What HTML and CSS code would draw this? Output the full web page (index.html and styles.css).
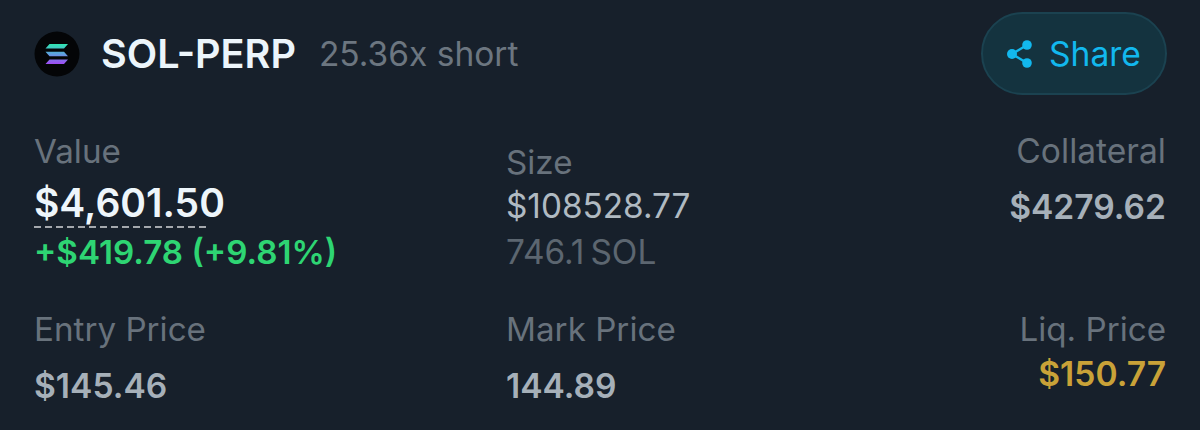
FILE: index.html
```html
<!DOCTYPE html>
<html lang="en">
<head>
    <meta charset="UTF-8">
    <meta name="viewport" content="width=device-width, initial-scale=1.0">
    <title>SOL-PERP</title>
    <link rel="stylesheet" href="styles.css">
</head>
<body>
    <div class="card">
        <div class="header">
            <div class="market">
                <svg class="logo" viewBox="0 0 46 46" width="46" height="46">
                    <defs>
                        <linearGradient id="sol" x1="0" y1="0" x2="0" y2="1">
                            <stop offset="0" stop-color="#2fe6b0"/>
                            <stop offset="0.5" stop-color="#5f9fe0"/>
                            <stop offset="1" stop-color="#a04bf5"/>
                        </linearGradient>
                    </defs>
                    <circle cx="23" cy="23" r="22.5" fill="#040507"/>
                    <path fill="url(#sol)" d="M15.500 13h18.500l-4 4.600h-18.500zM11.500 20.700h18.500l4 4.600h-18.500zM15.500 28.400h18.500l-4 4.600h-18.500z"/>
                </svg>
                <span class="symbol">SOL-PERP</span>
                <span class="leverage">25.36x short</span>
            </div>
            <button class="share">
                <svg viewBox="0 0 26 28" width="26" height="28">
                    <path d="M20 5 5 14l15 9" fill="none" stroke="#12b8ee" stroke-width="2.400"/>
                    <circle cx="20" cy="5" r="4.800" fill="#12b8ee"/>
                    <circle cx="5" cy="14" r="5" fill="#12b8ee"/>
                    <circle cx="20" cy="23" r="4.800" fill="#12b8ee"/>
                </svg>
                Share
            </button>
        </div>

        <div class="stats">
            <div class="stat stat-value">
                <span class="label">Value</span>
                <span class="big">$4,601.50</span>
                <span class="pnl">+$419.78 (+9.81%)</span>
            </div>
            <div class="stat stat-size">
                <span class="label">Size</span>
                <span class="size-usd">$108528.77</span>
                <span class="size-sol">746.1<span class="unit">SOL</span></span>
            </div>
            <div class="stat stat-right stat-collateral">
                <span class="label">Collateral</span>
                <span class="num">$4279.62</span>
            </div>

            <div class="stat stat-bottom">
                <span class="label">Entry Price</span>
                <span class="num">$145.46</span>
            </div>
            <div class="stat stat-bottom">
                <span class="label">Mark Price</span>
                <span class="num">144.89</span>
            </div>
            <div class="stat stat-right stat-liq">
                <span class="label">Liq. Price</span>
                <span class="num liq">$150.77</span>
            </div>
        </div>
    </div>
</body>
</html>
```

FILE: styles.css
```css
body {
    margin: 0;
    background-color: #17202b;
    font-family: Inter, "Liberation Sans", sans-serif;
}

.card {
    height: 430px;
    box-sizing: border-box;
    padding: 12px 34px 0 34px;
}

.header {
    display: flex;
    justify-content: space-between;
    align-items: center;
}

.market {
    display: flex;
    align-items: center;
}

.logo {
    margin-right: 21px;
}

.symbol {
    font-size: 39.6px;
    font-weight: 600;
    color: #ecf5fb;
    margin-right: 23px;
}

.leverage {
    font-size: 33.5px;
    color: #6c7680;
}

.share {
    display: flex;
    align-items: center;
    gap: 16px;
    width: 186px;
    height: 83px;
    margin-right: -1px;
    padding: 0 0 0 24px;
    box-sizing: border-box;
    background: #14333f;
    border: 2px solid #1b4250;
    border-radius: 42px;
    color: #12b8ee;
    font-family: inherit;
    font-size: 33.6px;
}

.stats {
    display: grid;
    grid-template-columns: 472px 1fr auto;
    margin-top: 38px;
}

.stat {
    display: flex;
    flex-direction: column;
    align-items: flex-start;
}

.stat-right {
    align-items: flex-end;
}

.label {
    font-size: 33.2px;
    line-height: 36px;
    color: #68727c;
}

.stat-collateral .label {
    font-size: 33.6px;
}

.big {
    font-size: 39px;
    line-height: 44px;
    font-weight: 600;
    color: #eef6fb;
    margin-top: 12px;
    position: relative;
}

/* dashed line under the value */
.big::after {
    content: "";
    position: absolute;
    left: 0;
    top: 45px;
    width: 176px;
    height: 2px;
    background: repeating-linear-gradient(to right, #a4a8ad 0 7px, transparent 7px 11px);
}

.pnl {
    font-size: 33.2px;
    line-height: 36px;
    font-weight: 600;
    color: #2ed573;
    margin-top: 9px;
}

.stat-size {
    padding-top: 11px;
}

.size-usd {
    font-size: 33.3px;
    line-height: 36px;
    color: #b0bac2;
    margin-top: 8px;
}

.size-sol {
    font-size: 33.4px;
    line-height: 36px;
    color: #5c6670;
    margin-top: 10px;
}

.unit {
    margin-left: 6px;
}

.num {
    font-size: 33.6px;
    line-height: 36px;
    font-weight: 600;
    color: #a6b0b9;
    margin-top: 20px;
}

.stat-bottom,
.stat-liq {
    margin-top: 41px;
}

.stat-bottom .num {
    margin-top: 21px;
}

.stat-liq .num {
    margin-top: 9px;
}

.liq {
    color: #c9a238;
}
```
